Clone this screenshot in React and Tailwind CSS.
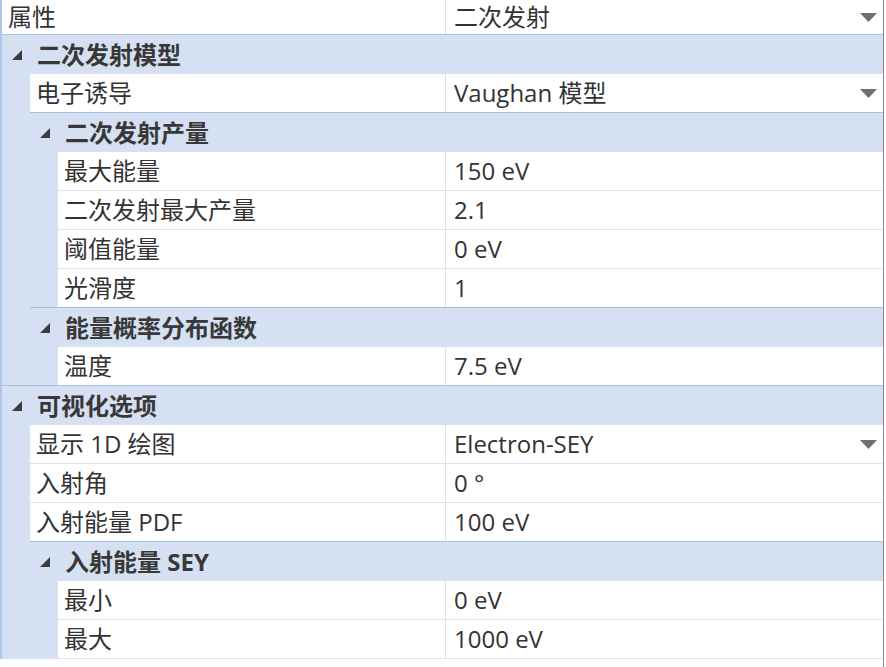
const rows = [
  { type: "section", level: 0, label: "二次发射模型" },
  { type: "item", level: 1, label: "电子诱导", value: "Vaughan 模型", dropdown: true },
  { type: "section", level: 1, label: "二次发射产量" },
  { type: "item", level: 2, label: "最大能量", value: "150 eV" },
  { type: "item", level: 2, label: "二次发射最大产量", value: "2.1" },
  { type: "item", level: 2, label: "阈值能量", value: "0 eV" },
  { type: "item", level: 2, label: "光滑度", value: "1" },
  { type: "section", level: 1, label: "能量概率分布函数" },
  { type: "item", level: 2, label: "温度", value: "7.5 eV" },
  { type: "section", level: 0, label: "可视化选项" },
  { type: "item", level: 1, label: "显示 1D 绘图", value: "Electron-SEY", dropdown: true },
  { type: "item", level: 1, label: "入射角", value: "0 °" },
  { type: "item", level: 1, label: "入射能量 PDF", value: "100 eV" },
  { type: "section", level: 1, label: "入射能量 SEY" },
  { type: "item", level: 2, label: "最小", value: "0 eV" },
  { type: "item", level: 2, label: "最大", value: "1000 eV" },
];

const INDENT = 28;

function DropArrow() {
  return (
    <svg width="17" height="9" viewBox="0 0 17 9" className="shrink-0">
      <path d="M0 0 H17 L8.5 9 Z" fill="#6f6f6f" />
    </svg>
  );
}

function Expander() {
  return (
    <svg width="10" height="10" viewBox="0 0 10 10" className="shrink-0">
      <path d="M10 0 V10 H0 Z" fill="#3c3c3c" />
    </svg>
  );
}

function SectionRow({ row }) {
  return (
    <div
      className="flex h-[39px] items-center"
      style={{ paddingLeft: 10 + row.level * INDENT }}
    >
      <Expander />
      <span className="ml-[15px] font-bold text-[#383838] leading-none">{row.label}</span>
    </div>
  );
}

function ItemRow({ row, next }) {
  const indent = row.level * INDENT;
  let line = { ml: indent, color: "bg-[#d9e3f1]" };
  if (next && next.type === "section") {
    line = { ml: next.level * INDENT, color: "bg-[#a8c2e6]" };
  }
  return (
    <div>
      <div className="flex h-[38px]" style={{ paddingLeft: indent }}>
        <div
          className="flex items-center bg-white pl-[6px] border-r border-[#d6e0ef]"
          style={{ width: 444 - indent }}
        >
          <span className="leading-none">{row.label}</span>
        </div>
        <div className="flex flex-1 items-center justify-between bg-white pl-[8px] pr-[6px]">
          <span className="leading-none">{row.value}</span>
          {row.dropdown && <DropArrow />}
        </div>
      </div>
      <div className={`h-px ${line.color}`} style={{ marginLeft: line.ml }} />
    </div>
  );
}

export default function App() {
  return (
    <div
      className="h-[667px] w-[886px] bg-white text-[24px] text-[#333333] overflow-hidden"
      style={{ fontFamily: '"Open Sans", "Noto Sans CJK SC", sans-serif' }}
    >
      <div className="h-[667px] w-[884px] border-r border-[#8a8a94]">
        <div className="border-l-2 border-[#afc7ea] bg-[#d5e0f2]">
          <div className="flex h-[34px] bg-white">
            <div className="flex w-[444px] items-center pl-[6px] border-r border-[#d6e0ef]">
              <span className="leading-none">属性</span>
            </div>
            <div className="flex flex-1 items-center justify-between pl-[8px] pr-[6px]">
              <span className="leading-none">二次发射</span>
              <DropArrow />
            </div>
          </div>
          <div className="h-px bg-[#a8c2e6]" />
          {rows.map((row, i) =>
            row.type === "section" ? (
              <SectionRow key={i} row={row} />
            ) : (
              <ItemRow key={i} row={row} next={rows[i + 1]} />
            )
          )}
        </div>
      </div>
    </div>
  );
}
